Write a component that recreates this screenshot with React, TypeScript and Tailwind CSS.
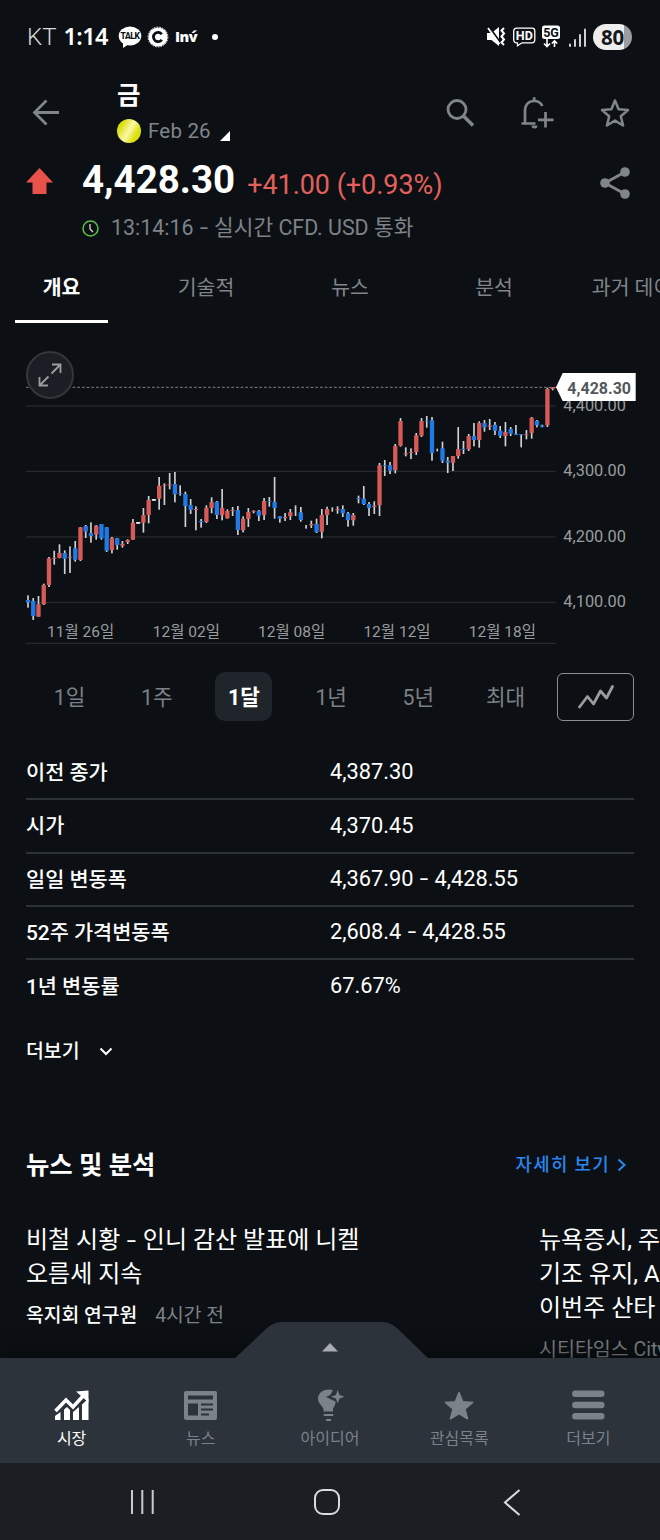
import clsx from "clsx"
import type { ReactNode } from "react"

type Candle = [kind: "r" | "b" | "n", high: number, top: number, bottom: number, low: number]

// r = up, b = down, n = unchanged; values are y coordinates in the chart's view box
const CANDLES: Candle[] = [
  ["b", 766, 780, 787, 803],
  ["b", 774, 783, 828, 840],
  ["r", 768, 793, 830, 830],
  ["r", 731, 735, 793, 795],
  ["r", 651, 655, 735, 741],
  ["r", 632, 653, 656, 674],
  ["r", 613, 639, 654, 655],
  ["b", 631, 639, 656, 702],
  ["r", 619, 650, 653, 699],
  ["b", 603, 625, 659, 665],
  ["r", 561, 562, 660, 663],
  ["b", 555, 558, 575, 594],
  ["b", 547, 579, 588, 608],
  ["r", 555, 557, 584, 599],
  ["b", 552, 552, 595, 599],
  ["b", 561, 562, 632, 636],
  ["r", 591, 594, 630, 640],
  ["b", 594, 595, 615, 629],
  ["r", 603, 611, 617, 623],
  ["r", 598, 600, 606, 612],
  ["r", 537, 548, 599, 600],
  ["n", 546, 546, 551, 551],
  ["r", 504, 525, 548, 578],
  ["r", 468, 480, 525, 550],
  ["n", 477, 477, 482, 482],
  ["r", 411, 437, 476, 509],
  ["r", 430, 435, 437, 495],
  ["r", 399, 433, 436, 448],
  ["b", 396, 432, 463, 487],
  ["b", 436, 460, 462, 467],
  ["b", 455, 462, 498, 561],
  ["b", 477, 495, 510, 522],
  ["r", 499, 507, 510, 571],
  ["b", 537, 543, 547, 563],
  ["r", 496, 503, 546, 549],
  ["r", 472, 486, 504, 520],
  ["b", 483, 485, 525, 537],
  ["r", 447, 503, 526, 541],
  ["r", 508, 513, 535, 536],
  ["r", 501, 510, 513, 528],
  ["b", 498, 510, 570, 585],
  ["r", 529, 536, 571, 577],
  ["r", 504, 516, 537, 561],
  ["r", 511, 512, 515, 520],
  ["b", 510, 513, 527, 543],
  ["r", 474, 483, 525, 540],
  ["b", 471, 483, 485, 500],
  ["b", 411, 486, 504, 536],
  ["b", 528, 529, 536, 548],
  ["r", 519, 531, 535, 543],
  ["r", 507, 517, 529, 540],
  ["n", 496, 510, 510, 528],
  ["b", 501, 517, 540, 545],
  ["n", 555, 560, 560, 566],
  ["r", 542, 552, 556, 564],
  ["b", 536, 552, 576, 579],
  ["r", 507, 525, 575, 595],
  ["r", 500, 507, 525, 555],
  ["n", 502, 508, 508, 515],
  ["r", 499, 507, 510, 521],
  ["b", 496, 507, 520, 531],
  ["b", 516, 520, 540, 560],
  ["r", 519, 525, 541, 557],
  ["b", 467, 474, 477, 490],
  ["b", 438, 476, 492, 495],
  ["b", 486, 492, 504, 528],
  ["r", 484, 497, 501, 522],
  ["r", 369, 376, 496, 528],
  ["b", 360, 375, 377, 408],
  ["b", 366, 376, 392, 402],
  ["r", 312, 318, 391, 400],
  ["r", 234, 243, 317, 320],
  ["r", 322, 340, 343, 349],
  ["r", 325, 336, 339, 357],
  ["r", 279, 286, 336, 345],
  ["r", 234, 243, 287, 291],
  ["b", 228, 242, 244, 263],
  ["b", 231, 241, 339, 362],
  ["n", 326, 330, 330, 334],
  ["b", 305, 325, 362, 369],
  ["b", 351, 362, 368, 399],
  ["r", 348, 348, 368, 393],
  ["r", 261, 327, 348, 356],
  ["b", 303, 326, 329, 342],
  ["r", 282, 288, 328, 333],
  ["b", 249, 288, 300, 319],
  ["r", 244, 249, 300, 323],
  ["b", 240, 249, 262, 275],
  ["r", 237, 256, 260, 270],
  ["b", 246, 254, 272, 285],
  ["b", 258, 272, 287, 294],
  ["r", 246, 276, 288, 319],
  ["b", 261, 267, 281, 288],
  ["b", 255, 281, 284, 285],
  ["b", 282, 282, 285, 322],
  ["r", 270, 283, 286, 298],
  ["r", 231, 233, 279, 296],
  ["b", 240, 242, 256, 262],
  ["b", 254, 256, 260, 262],
  ["r", 143, 147, 256, 261],
  ["r", 141, 142, 147, 151],
]

const CANDLE_COLORS = { r: "#d65a57", b: "#1f7ae6", n: "#e8e8e8" }

const PRICE_TICKS = [
  { label: "4,400.00", y: 197.5 },
  { label: "4,300.00", y: 394 },
  { label: "4,200.00", y: 590.5 },
  { label: "4,100.00", y: 787 },
]

const DATE_TICKS = [
  { label: "11월 26일", x: 242 },
  { label: "12월 02일", x: 559 },
  { label: "12월 08일", x: 875 },
  { label: "12월 12일", x: 1191 },
  { label: "12월 18일", x: 1507 },
]

const TABS = ["개요", "기술적", "뉴스", "분석", "과거 데이터"]
const RANGES = ["1일", "1주", "1달", "1년", "5년", "최대"]

const STATS = [
  ["이전 종가", "4,387.30"],
  ["시가", "4,370.45"],
  ["일일 변동폭", "4,367.90", "4,428.55"],
  ["52주 가격변동폭", "2,608.4", "4,428.55"],
  ["1년 변동률", "67.67%"],
]

const Dash = () => <span className="mx-[2px] inline-block scale-x-140">-</span>

const StatusBar = () => (
  <div className="flex h-[74px] items-center justify-between pr-[28px] pl-[27px] text-white">
    <div className="flex items-center">
      <span className="text-[24px] leading-none font-light text-[#d5d7d8]">KT</span>
      <span className="ml-[7px] font-['Noto_Sans'] text-[23.5px] leading-none font-semibold tracking-[-0.6px]">
        1:14
      </span>
      <svg className="ml-[10px]" width="24" height="24" viewBox="0 0 24 24">
        <ellipse cx="12" cy="11" rx="11.3" ry="9.4" fill="#fff" />
        <path d="M5 17l0 6 6-4z" fill="#fff" />
        <text x="12" y="14" fontSize="8.5" fontWeight="800" textAnchor="middle" fill="#0c1014" letterSpacing="-0.4">
          TALK
        </text>
      </svg>
      <svg className="ml-[5px]" width="22" height="22" viewBox="0 0 22 22">
        <circle cx="11" cy="11" r="9.6" fill="#fff" />
        <circle cx="11" cy="11" r="9.9" fill="none" stroke="#fff" strokeWidth="1" strokeDasharray="1.6 1.2" />
        <path d="M14.8 8.3A4.6 4.6 0 1 0 14.8 13.7" fill="none" stroke="#0c1014" strokeWidth="2.8" />
      </svg>
      <span className="ml-[6px] font-['Open_Sans'] text-[14.5px] leading-none font-extrabold tracking-[-0.4px]">
        Inv́
      </span>
      <span className="ml-[15px] size-[6px] rounded-full bg-white" />
    </div>
    <div className="flex items-center">
      <svg width="19" height="20" viewBox="0 0 19 20">
        <path d="M0 6h4.500l7.500-6v19l-7.500-6H0z" fill="#fff" />
        <path d="M2.500.5l12 16.500" stroke="#0c1014" strokeWidth="2" />
        <path d="M1 1l11.500 16" stroke="#fff" strokeWidth="1.8" />
        <path d="M17 1l-2.500 2.500 2.500 3-2.500 3 2.500 3-2.500 3 2.500 2.500" fill="none" stroke="#fff" strokeWidth="2" />
      </svg>
      <svg className="ml-[7px]" width="23" height="20" viewBox="0 0 23 20">
        <path
          d="M3.5 1.2h15.5a2.8 2.8 0 0 1 2.8 2.8v9a2.8 2.8 0 0 1-2.8 2.8H9l-4.5 3v-3H3.5a2.8 2.8 0 0 1-2.8-2.8V4a2.8 2.8 0 0 1 2.8-2.8z"
          fill="none"
          stroke="#fff"
          strokeWidth="1.3"
        />
        <text x="11.3" y="13" fontSize="12.5" fontWeight="700" textAnchor="middle" fill="#fff">
          HD
        </text>
      </svg>
      <svg className="ml-[5px]" width="20" height="24" viewBox="0 0 20 24">
        <rect x="1" y="0.5" width="18" height="13.5" rx="2.5" fill="#fff" />
        <text x="10" y="11.6" fontSize="12.5" fontWeight="700" textAnchor="middle" fill="#0c1014">
          5G
        </text>
        <path
          d="M6 14v7M3 18.500l3 3 3-3M13.500 22v-6M10.800 18.500l2.700-2.700 2.700 2.700"
          fill="none"
          stroke="#fff"
          strokeWidth="1.6"
        />
      </svg>
      <svg className="ml-[7px]" width="19" height="19" viewBox="0 0 19 19">
        <path
          d="M2 16.500v1.500M7 12v6M12 7v11M17 1.500v16.500"
          stroke="#e4e6e8"
          strokeWidth="1.8"
          strokeLinecap="round"
        />
      </svg>
      <span className="ml-[6px] flex h-[26px] w-[39px] items-center justify-center rounded-full bg-linear-to-r from-[#eeeeee] from-80% to-[#9b9d9e] to-80% font-['Noto_Sans'] text-[20.5px] leading-none font-bold tracking-[-0.3px] text-[#15191c]">
        80
      </span>
    </div>
  </div>
)

const Header = () => (
  <header className="flex h-[78px] text-[#80858a]">
    <svg className="mt-[25px] ml-[32px]" width="28" height="28" viewBox="0 0 28 28">
      <path d="M27 13.500H3M14.500 1.500l-12 12 12 12" fill="none" stroke="currentColor" strokeWidth="2.8" />
    </svg>
    <div className="ml-[57px] w-[200px]">
      <h1 className="mt-[7px] text-[25.5px] leading-[28px] font-bold text-white">금</h1>
      <div className="mt-[9px] flex h-[26px] items-center">
        <span className="size-[24px] rounded-full bg-linear-[120deg] from-[#d9df0c] from-20% via-[#fbf7a8] via-50% to-[#dde00a] to-75%" />
        <span className="ml-[7px] text-[20.5px] leading-none tracking-[0.2px]">Feb 26</span>
        <svg className="mt-[10px] ml-[9px]" width="10" height="10" viewBox="0 0 10 10">
          <path d="M10 0v10H0z" fill="#fff" />
        </svg>
      </div>
    </div>
    <div className="ml-auto flex pr-[30px]">
      <svg className="mt-[25px] mr-[46px]" width="29" height="29" viewBox="0 0 29 29">
        <circle cx="11" cy="10.5" r="9" fill="none" stroke="currentColor" strokeWidth="2.8" />
        <path d="M17.500 17l9.500 9.500" stroke="currentColor" strokeWidth="3.6" />
      </svg>
      <svg className="mt-[22px] mr-[46px]" width="33" height="33" viewBox="0 0 33 33">
        <path
          d="M0.500 27.500h14M4 27V14c0-5 3.500-9 9-9 4 0 7 2 8.300 5M13.200 1.200v4M24.500 16v15.500M17 23.800h15.500"
          fill="none"
          stroke="currentColor"
          strokeWidth="2.7"
        />
        <path d="M10.500 29.500h6a3 3 0 0 1-6 0z" fill="currentColor" />
      </svg>
      <svg className="mt-[24px]" width="30" height="30" viewBox="0 0 30 30">
        <path
          d="M15 2.500l3.600 8.800 9.400.8-7.200 6.200 2.300 9.200L15 22.600l-8.100 4.900 2.300-9.200L2 12.100l9.400-.8z"
          fill="none"
          stroke="currentColor"
          strokeWidth="2.5"
          strokeLinejoin="round"
        />
      </svg>
    </div>
  </header>
)

const PriceSummary = () => (
  <section className="flex h-[98px] pr-[30px] pl-[26px]">
    <svg className="mt-[16px] shrink-0" width="27" height="26" viewBox="0 0 27 26">
      <path d="M13.500 0L27 14.500h-6.500V26h-14V14.500H0z" fill="#e8524a" />
    </svg>
    <div className="ml-[29px] flex-1">
      <div className="flex h-[58px] items-baseline whitespace-nowrap">
        <span className="text-[38.5px] leading-[56px] font-bold text-white">4,428.30</span>
        <span className="relative top-px ml-[12px] text-[26.9px] text-[#e4605c]">+41.00 (+0.93%)</span>
      </div>
      <div className="flex h-[36px] items-center text-[#7d8287]">
        <svg width="17" height="17" viewBox="0 0 17 17">
          <circle cx="8.5" cy="8.5" r="7.5" fill="none" stroke="#5cc04a" strokeWidth="1.5" />
          <path d="M8 4v5l3 3" fill="none" stroke="#d5dbd2" strokeWidth="1.3" />
        </svg>
        <span className="ml-[12px] pt-px text-[21.4px] whitespace-nowrap">
          13:14:16 <Dash /> 실시간 CFD. USD 통화
        </span>
      </div>
    </div>
    <svg className="mt-[15px]" width="30" height="32" viewBox="0 0 30 32">
      <path d="M25 5L5 16l20 11" fill="none" stroke="#80858a" strokeWidth="2.8" />
      <circle cx="25" cy="5" r="4.8" fill="#80858a" />
      <circle cx="5" cy="16" r="4.8" fill="#80858a" />
      <circle cx="25" cy="27" r="4.8" fill="#80858a" />
    </svg>
  </section>
)

const Tabs = () => (
  <nav className="flex h-[73px] pl-[15px] text-[20.5px] whitespace-nowrap">
    {TABS.map((tab, i) => (
      <div
        key={tab}
        className={clsx(
          "h-full shrink-0 pt-[22px] text-center leading-[32px]",
          i === 0
            ? "mr-[26px] w-[93px] border-b-[3px] border-white font-bold text-white"
            : "w-[144px] text-[#80858a]",
          i === 4 && "pl-[7px]"
        )}
      >
        {tab}
      </div>
    ))}
  </nav>
)

const Chart = () => (
  <section className="relative mt-[17px] h-[310px]">
    <svg width="660" height="310" viewBox="0 0 1980 930">
      {PRICE_TICKS.map((tick) => (
        <g key={tick.label}>
          <path d={`M78 ${tick.y}H1667`} stroke="#24292c" strokeWidth="3.5" />
          <text x="1690" y={tick.y + 15} fontSize="49" fill="#9a9c9e">
            {tick.label}
          </text>
        </g>
      ))}
      <path d="M78 910H1667" stroke="#24292c" strokeWidth="3.5" />
      {DATE_TICKS.map((tick) => (
        <text key={tick.label} x={tick.x} y="892" fontSize="46.5" textAnchor="middle" fill="#9a9c9e">
          {tick.label}
        </text>
      ))}
      <path d="M78 142H1667" stroke="#7d8184" strokeWidth="3" strokeDasharray="8 6" />
      {CANDLES.map(([kind, high, top, bottom, low], i) => {
        const x = 84 + i * 15.74
        return (
          <g key={i}>
            <rect x={x - 2.5} y={high} width="5" height={low - high} fill="#cfd1d2" />
            <rect x={x - 6.5} y={top} width="13" height={bottom - top} rx="1" fill={CANDLE_COLORS[kind]} />
          </g>
        )
      })}
      <path d="M1668 142L1688 99H1907V183H1688z" fill="#fff" />
      <text x="1702" y="162" fontSize="48" fontWeight="700" fill="#54585b">
        4,428.30
      </text>
    </svg>
    <button className="absolute top-[11px] left-[26px] flex size-[48px] items-center justify-center rounded-full border-2 border-[#33373c] bg-[#1b1f25]">
      <svg width="24" height="24" viewBox="0 0 24 24">
        <path
          d="M14 1.500h8.500v8.500M22.500 1.500l-9 9M10 22.500h-8.500v-8.500M1.500 22.500l9-9"
          fill="none"
          stroke="#9a9c9e"
          strokeWidth="1.8"
        />
      </svg>
    </button>
  </section>
)

const RangePicker = () => (
  <div className="mt-[22px] flex h-[49px] items-center pr-[26px] pl-[26px]">
    {RANGES.map((range) => (
      <div key={range} className="flex w-[87.2px] shrink-0 justify-center">
        <span
          className={clsx(
            "flex h-[49px] w-[57px] items-center justify-center rounded-[10px] pt-[3px] text-[21.3px]",
            range === "1달" ? "bg-[#20252b] font-bold text-white" : "text-[#7b8085]"
          )}
        >
          {range}
        </span>
      </div>
    ))}
    <button className="ml-auto flex h-[48px] w-[77px] items-center justify-center rounded-[6px] border-[1.5px] border-[#8b8f92]">
      <svg width="36" height="24" viewBox="0 0 36 24">
        <path
          d="M1.500 22l8-10.500 6 7.500 7-13 6 7L34.500 1.500"
          fill="none"
          stroke="#9b9b9b"
          strokeWidth="2.8"
          strokeLinejoin="round"
          strokeLinecap="round"
        />
      </svg>
    </button>
  </div>
)

const Stats = () => (
  <section className="mx-[26px] mt-[26px]">
    {STATS.map(([label, value, high], i) => (
      <div
        key={label}
        className={clsx(
          "flex h-[53.3px] items-center text-[21.8px] text-white",
          i < STATS.length - 1 && "border-b-2 border-[#2d3237]"
        )}
      >
        <span className="w-[304px] pt-[2px] text-[20.8px] font-medium">{label}</span>
        <span>
          {value}
          {high && (
            <>
              {" "}
              <Dash /> {high}
            </>
          )}
        </span>
      </div>
    ))}
    <div className="mt-[22px] flex h-[32px] items-center text-[19.4px] font-medium text-white">
      더보기
      <svg className="ml-[19px]" width="14" height="9" viewBox="0 0 14 9">
        <path d="M1.500 1.500L7 7l5.500-5.500" fill="none" stroke="#fff" strokeWidth="2" />
      </svg>
    </div>
  </section>
)

const News = () => (
  <section className="min-h-0 flex-1 overflow-hidden">
    <div className="mt-[80px] flex h-[36px] items-center justify-between pr-[34px] pl-[26px]">
      <h2 className="text-[25.4px] font-bold text-white">뉴스 및 분석</h2>
      <span className="flex items-center text-[17.8px] font-medium tracking-[1.4px] text-[#2b87f0]">
        자세히 보기
        <svg className="ml-[7px]" width="9" height="14" viewBox="0 0 9 14">
          <path d="M1.500 1.500L7.500 7l-6 5.500" fill="none" stroke="currentColor" strokeWidth="2" />
        </svg>
      </span>
    </div>
    <div className="mt-[40px] flex whitespace-nowrap">
      <article className="w-[513px] shrink-0 pl-[26px]">
        <h3 className="text-[24px] leading-[34px] text-white">
          비철 시황 <Dash /> 인니 감산 발표에 니켈
          <br />
          오름세 지속
        </h3>
        <p className="mt-[11px] flex gap-[18px] text-[19.3px] leading-[28px]">
          <span className="font-medium text-white">옥지회 연구원</span>
          <span className="text-[#7d8287]">4시간 전</span>
        </p>
      </article>
      <article className="shrink-0 pl-[26px]">
        <h3 className="text-[24px] leading-[34px] text-white">
          뉴욕증시, 주
          <br />
          기조 유지, A
          <br />
          이번주 산타
        </h3>
        <p className="mt-[11px] text-[19.5px] leading-[28px] text-[#7d8287]">시티타임스 City</p>
      </article>
    </div>
  </section>
)

const NavItem = ({ label, active, children }: { label: string; active?: boolean; children: ReactNode }) => (
  <div className={clsx("flex flex-1 flex-col items-center", active ? "text-white" : "text-[#7b828a]")}>
    <div className="flex h-[32px] items-center justify-center">{children}</div>
    <span className="mt-[7px] text-[16px] leading-[22px]">{label}</span>
  </div>
)

const BottomNav = () => (
  <nav className="relative flex h-[105px] shrink-0 bg-[#2c333b] px-[7px] pt-[31px] shadow-[0_-4px_24px_rgba(0,0,0,0.45)]">
    <svg className="absolute -top-[36px] left-[234px]" width="195" height="37" viewBox="0 0 195 37">
      <path d="M0 37L32 7Q39 0 48 0H148Q157 0 164 7L195 37z" fill="#2c333b" />
      <path d="M96 21l8 8.500H88z" fill="#a9adb2" />
    </svg>
    <NavItem label="시장" active>
      <svg width="36" height="30" viewBox="0 0 36 30">
        <path
          d="M1 26l5.500-4v8H1zM10 19.500l3-2.500 3 3v10h-6zM19 22l6-5v13h-6zM28 14.500l6.500-6V30H28z"
          fill="#fff"
        />
        <path d="M1.500 21L12 10l7 7L30 5" fill="none" stroke="#2c333b" strokeWidth="6" />
        <path d="M1.500 21L12 10l7 7L30 5" fill="none" stroke="#fff" strokeWidth="3.6" />
        <path d="M22 1.500L34.500 .5V12.500z" fill="#fff" />
      </svg>
    </NavItem>
    <NavItem label="뉴스">
      <svg width="33" height="29" viewBox="0 0 33 29">
        <rect width="33" height="29" rx="2" fill="currentColor" />
        <path
          d="M4 4.500h25v4H4zM4 12.500h10v12H4zM17 12.500h12v2H17zM17 17.500h12v2H17zM17 22.500h8v2h-8z"
          fill="#2c333b"
        />
      </svg>
    </NavItem>
    <NavItem label="아이디어">
      <svg className="ml-[2px]" width="27" height="33" viewBox="0 0 27 33">
        <path
          d="M15 1C9-1 0 2 0 9.500c0 4.500 3.500 6.500 5.500 10.500v2.500H15v-2.500c1-2.500 2.500-3.500 2.500-7.500l-2-1L8 8l4.500-2.200z"
          fill="currentColor"
        />
        <path d="M5.700 26h9.600M8 31h5" stroke="currentColor" strokeWidth="2" />
        <path d="M19.700 1l1.800 4.900 5 1.800-5 1.800-1.800 4.900-1.800-4.900-5-1.800 5-1.800z" fill="currentColor" />
      </svg>
    </NavItem>
    <NavItem label="관심목록">
      <svg width="30" height="29" viewBox="0 0 30 29">
        <path
          d="M15 1.500l3.700 9.300 10 .7-7.700 6.400 2.500 9.900L15 22.500l-8.500 5.300L9 17.900l-7.700-6.400 10-.7z"
          fill="currentColor"
          stroke="currentColor"
          strokeWidth="1.5"
          strokeLinejoin="round"
        />
      </svg>
    </NavItem>
    <NavItem label="더보기">
      <svg width="33" height="30" viewBox="0 0 33 30">
        <path d="M3.300 3.800h26M3.300 15h26M3.300 26.200h26" stroke="currentColor" strokeWidth="6.5" strokeLinecap="round" />
      </svg>
    </NavItem>
  </nav>
)

const SystemNav = () => (
  <div className="relative h-[77px] shrink-0 bg-[#1b1f23]">
    <div className="flex h-[78px] items-center pl-[130px]">
      <svg width="25" height="26" viewBox="0 0 25 26">
        <path d="M2 1v24M12.300 1v24M22.700 1v24" stroke="#c9cbcd" strokeWidth="2" />
      </svg>
      <svg className="ml-[158px]" width="28" height="28" viewBox="0 0 28 28">
        <rect x="2" y="2" width="24" height="24" rx="8" fill="none" stroke="#d9dbdc" strokeWidth="2" />
      </svg>
      <svg className="ml-[162px]" width="18" height="27" viewBox="0 0 18 27">
        <path d="M16.500 1L2 13.500 16.500 26" fill="none" stroke="#d9dbdc" strokeWidth="2" />
      </svg>
    </div>
  </div>
)

export default function App() {
  return (
    <div className="flex h-[1540px] w-[660px] flex-col overflow-hidden bg-[#0c1014] font-[Roboto,'Noto_Sans_CJK_KR',sans-serif]">
      <StatusBar />
      <Header />
      <PriceSummary />
      <Tabs />
      <Chart />
      <RangePicker />
      <Stats />
      <News />
      <BottomNav />
      <SystemNav />
    </div>
  )
}
